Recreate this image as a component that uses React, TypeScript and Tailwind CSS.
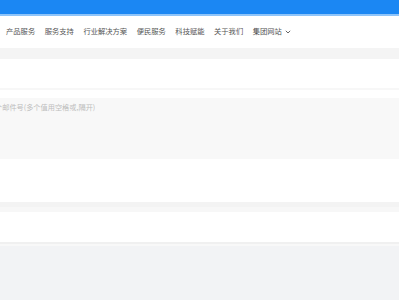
import React from "react";

const nav = ["产品服务", "服务支持", "行业解决方案", "便民服务", "科技赋能", "关于我们"];

export default function App() {
  return (
    <div
      className="w-[399px] h-[300px] overflow-hidden bg-[#f2f3f5] flex flex-col"
      style={{ fontFamily: '"Noto Sans CJK SC", "Noto Sans", sans-serif' }}
    >
      <div className="h-[14px] bg-[#1b87f3] shrink-0" />
      <div className="h-[2px] bg-[#8ec4f9] shrink-0" />
      <div className="h-[32px] bg-white flex items-center pl-[6px] gap-[9.5px] text-[7.3px] text-[#555] shrink-0">
        {nav.map((n) => (
          <span key={n} className="leading-none">{n}</span>
        ))}
        <span className="flex items-center gap-[2px] leading-none">
          集团网站
          <svg width="6" height="4" viewBox="0 0 6 4" className="ml-[1px]">
            <path d="M0.8 0.8 L3 3 L5.2 0.8" stroke="#666" strokeWidth="1" fill="none" />
          </svg>
        </span>
      </div>
      <div className="h-[11px] bg-[#f4f4f4] shrink-0" />
      <div className="h-[29px] bg-white shrink-0" />
      <div className="h-[2px] bg-[#f7f7f7] shrink-0" />
      <div className="h-[8px] bg-white shrink-0" />
      <div className="h-[61px] bg-[#f8f8f8] shrink-0 pt-[6px] overflow-hidden">
        <div className="ml-[-5px] text-[7.2px] text-[#bdbdbd] leading-none whitespace-nowrap">
          个邮件号(多个值用空格或,隔开)
        </div>
      </div>
      <div className="h-[43px] bg-white shrink-0" />
      <div className="h-[5px] bg-[#f3f3f3] shrink-0" />
      <div className="h-[5px] bg-[#f7f7f7] shrink-0" />
      <div className="h-[30px] bg-white shrink-0 flex items-center overflow-hidden">
        <span className="ml-[-5px] text-[7.3px] text-[#444] leading-none">：</span>
      </div>
      <div className="h-[2px] bg-[#f0f0f0] shrink-0" />
      <div className="h-[2px] bg-[#f8f8f8] shrink-0" />
      <div className="flex-1 bg-[#f2f3f5]" />
    </div>
  );
}
